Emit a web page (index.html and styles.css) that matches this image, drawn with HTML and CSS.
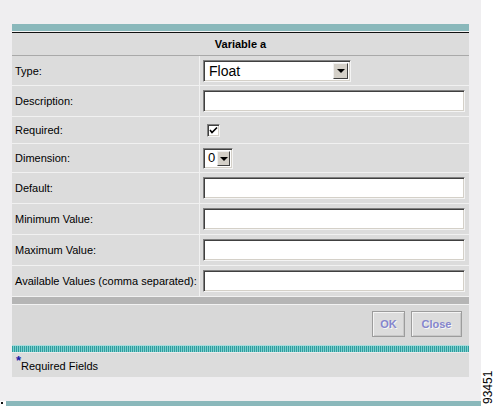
FILE: index.html
```html
<!DOCTYPE html>
<html>
<head>
<meta charset="utf-8">
<link rel="stylesheet" href="styles.css">
</head>
<body>
<div class="page">
  <div class="panel">
    <div class="topbar"></div>
    <div class="gap-line"></div>
    <div class="black-line"></div>
    <div class="title">Variable a</div>
    <div class="rows">
      <div class="row h29"><div class="label">Type:</div><div class="field"><div class="select wide"><span class="val">Float</span><span class="arrow"><span class="tri"></span></span></div></div></div>
      <div class="row h30"><div class="label">Description:</div><div class="field"><div class="input"></div></div></div>
      <div class="row h26"><div class="label">Required:</div><div class="field"><div class="check"><svg width="9" height="9" viewBox="0 0 9 9"><path d="M1 4 L3 6.5 L8 1.5" fill="none" stroke="#000" stroke-width="1.6"/></svg></div></div></div>
      <div class="row h28"><div class="label">Dimension:</div><div class="field"><div class="select narrow"><span class="val">0</span><span class="arrow"><span class="tri"></span></span></div></div></div>
      <div class="row h30"><div class="label">Default:</div><div class="field"><div class="input"></div></div></div>
      <div class="row h30"><div class="label">Minimum Value:</div><div class="field"><div class="input"></div></div></div>
      <div class="row h30"><div class="label">Maximum Value:</div><div class="field"><div class="input"></div></div></div>
      <div class="row h30"><div class="label">Available Values (comma separated):</div><div class="field"><div class="input"></div></div></div>
    </div>
    <div class="graybar"></div>
    <div class="actions">
      <div class="btn ok">OK</div>
      <div class="btn close">Close</div>
    </div>
    <div class="stripes"></div>
    <div class="footer"><span class="star">*</span>Required Fields</div>
  </div>
  <div class="figno">93451</div>
</div>
<div class="bottom"><span class="dot"></span><span class="line"></span></div>
</body>
</html>
```

FILE: styles.css
```css
html, body {
  margin: 0;
  padding: 0;
  background: #ffffff;
}
body {
  font-family: "Liberation Sans", Arial, sans-serif;
  font-size: 11px;
  color: #000;
}
.page {
  position: relative;
  width: 481px;
  height: 401px;
  background: #efeef0;
  padding: 24px 0 0 12px;
  box-sizing: border-box;
}
.panel {
  width: 457px;
  display: flex;
  flex-direction: column;
}
.topbar {
  height: 7px;
  background: #8ab8bb;
}
.gap-line {
  height: 1px;
  background: #f4f4f4;
}
.black-line {
  height: 1px;
  background: #111;
}
.title {
  height: 22px;
  background: #dcdcdc;
  border-bottom: 1px solid #a9a9a9;
  font-weight: bold;
  display: flex;
  align-items: center;
  justify-content: center;
}
.rows {
  display: flex;
  flex-direction: column;
  gap: 1px;
  background: #f1f1f1;
  padding-bottom: 1px;
}
.row {
  display: grid;
  grid-template-columns: 187px 1fr;
  column-gap: 1px;
  background: #f1f1f1;
}
.h29 { height: 29px; }
.h30 { height: 30px; }
.h26 { height: 26px; }
.h28 { height: 28px; }
.label {
  background: #dcdcdc;
  display: flex;
  align-items: center;
  padding-left: 3px;
}
.field {
  background: #dcdcdc;
  display: flex;
  align-items: center;
  padding-left: 3px;
}
.input {
  width: 262px;
  height: 22px;
  box-sizing: border-box;
  background: #fff;
  border-top: 1px solid #808080;
  border-left: 1px solid #808080;
  border-right: 1px solid #f4f4f4;
  border-bottom: 1px solid #f4f4f4;
  box-shadow: inset 1px 1px 0 #404040, inset -1px -1px 0 #d4d0c8;
}
.select {
  height: 22px;
  box-sizing: border-box;
  background: #fff;
  border-top: 1px solid #808080;
  border-left: 1px solid #808080;
  border-right: 1px solid #f4f4f4;
  border-bottom: 1px solid #f4f4f4;
  box-shadow: inset 1px 1px 0 #404040, inset -1px -1px 0 #d4d0c8;
  display: flex;
  align-items: center;
  justify-content: space-between;
  padding: 2px;
}
.select.wide { width: 148px; }
.select.narrow { width: 30px; height: 21px; }
.val {
  font-size: 14px;
  padding-left: 3px;
  line-height: 16px;
}
.narrow .val { font-size: 13px; padding-left: 2px; }
.arrow {
  width: 15px;
  height: 16px;
  box-sizing: border-box;
  background: #d4d0c8;
  border-top: 1px solid #f0f0f0;
  border-left: 1px solid #f0f0f0;
  border-right: 1px solid #404040;
  border-bottom: 1px solid #404040;
  display: flex;
  align-items: center;
  justify-content: center;
}
.narrow .arrow { height: 15px; width: 13px; }
.tri {
  width: 0;
  height: 0;
  border-left: 4px solid transparent;
  border-right: 4px solid transparent;
  border-top: 4px solid #000;
  margin-top: 1px;
}
.check {
  width: 13px;
  height: 13px;
  box-sizing: border-box;
  margin-left: 4px;
  background: #fff;
  border-top: 1px solid #808080;
  border-left: 1px solid #808080;
  border-right: 1px solid #f4f4f4;
  border-bottom: 1px solid #f4f4f4;
  box-shadow: inset 1px 1px 0 #404040, inset -1px -1px 0 #d4d0c8;
  display: flex;
  align-items: center;
  justify-content: center;
}
.check svg { display: block; }
.graybar {
  height: 7px;
  background: #b5b5b5;
  border-bottom: 1px solid #f2f2f2;
}
.actions {
  height: 40px;
  box-sizing: border-box;
  background: #d8d8d8;
  display: flex;
  justify-content: flex-end;
  align-items: flex-start;
  gap: 6px;
  padding: 6px 7px 0 0;
}
.btn {
  height: 26px;
  box-sizing: border-box;
  border: 1px solid #9c9c9c;
  box-shadow: inset 1px 1px 0 #f4f4f4, inset -1px -1px 0 #c8c8c8;
  background: #dcdcdc;
  color: #8585cc;
  text-shadow: 1px 1px 0 #f6f6f6;
  font-weight: bold;
  display: flex;
  align-items: center;
  justify-content: center;
}
.btn.ok { width: 33px; }
.btn.close { width: 51px; }
.stripes {
  height: 7px;
  background: repeating-linear-gradient(90deg, #2f9d9e 0 1px, #7fcfcf 1px 2px);
  border-top: 1px solid #a9dcdc;
  box-sizing: border-box;
}
.footer {
  height: 25px;
  background: #dcdcdc;
  display: flex;
  align-items: center;
  padding-left: 4px;
  padding-top: 2px;
  box-sizing: border-box;
  border-top: 1px solid #eaeaea;
}
.star {
  color: #1a1aa8;
  font-size: 13px;
  font-weight: bold;
  line-height: 10px;
  align-self: flex-start;
  margin-top: 1px;
  margin-right: 0;
}
.figno {
  position: absolute;
  left: 482px;
  top: 368px;
  font-size: 12px;
  width: 36px;
  height: 13px;
  line-height: 13px;
  transform-origin: 0 0;
  transform: translate(0, 36px) rotate(-90deg);
  white-space: nowrap;
}
.bottom {
  display: flex;
  align-items: flex-start;
  height: 5px;
  background: #ffffff;
}
.dot {
  width: 2px;
  height: 2px;
  margin: 1px 3px 0 1px;
  background: #111;
}
.line {
  width: 475px;
  height: 5px;
  background: #8ab8bb;
}
```
